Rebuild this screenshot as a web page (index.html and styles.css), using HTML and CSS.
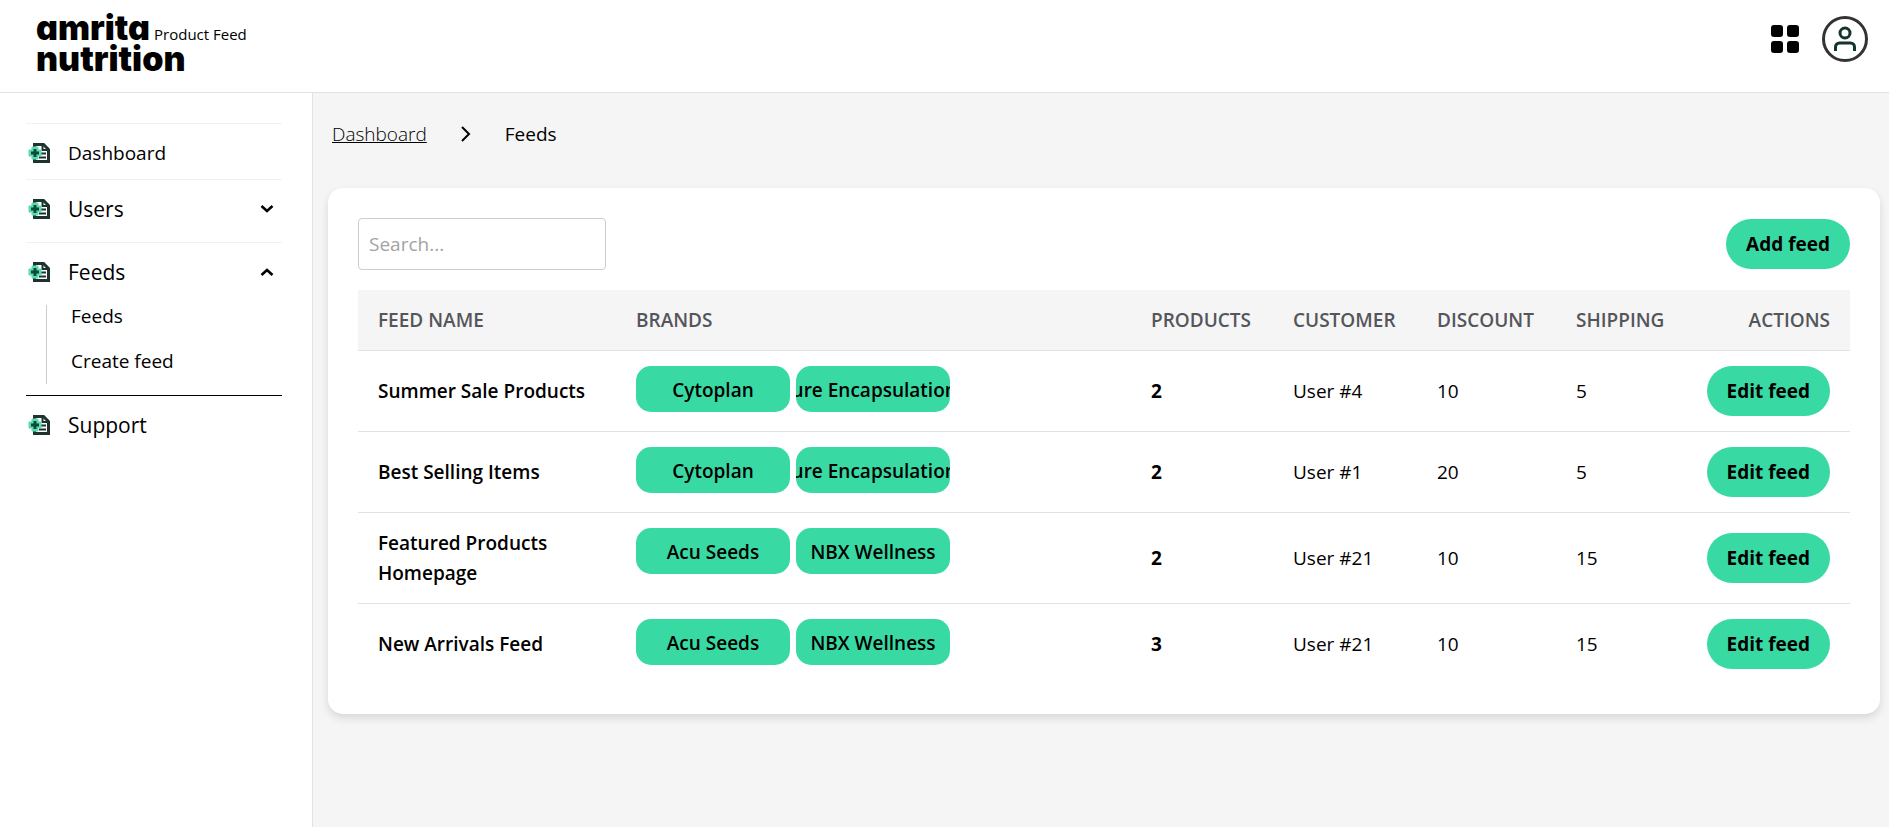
FILE: index.html
```html
<!DOCTYPE html>
<html lang="en">
<head>
    <meta charset="UTF-8">
    <meta name="viewport" content="width=device-width, initial-scale=1.0">
    <title>Product Feed</title>
    <link rel="stylesheet" href="styles.css">
</head>
<body>
    <!-- Shared icons -->
    <svg class="sprite" aria-hidden="true">
        <symbol id="icon-feed" viewBox="0 0 22 22">
            <path d="M6.500 6V2.500h9l5 5v12h-14v-4" fill="none" stroke="#1d3330" stroke-width="3"/>
            <path d="M14.500 2v6h6" fill="none" stroke="#1d3330" stroke-width="2"/>
            <path d="M12 11.500h6M11 15.500h7" stroke="#1d3330" stroke-width="2"/>
            <path d="M4 5h6v3h3v6h-3v3H4v-3H1V8h3z" fill="#5ddcae" stroke="#5ddcae" stroke-width="1" stroke-linejoin="round"/>
            <path d="M7 7v8M3 11h8" stroke="#0c4a3a" stroke-width="3"/>
        </symbol>
        <symbol id="icon-chevron" viewBox="0 0 14 10">
            <path d="M1.500 2l5.500 5 5.500-5" fill="none" stroke="#000" stroke-width="2.600"/>
        </symbol>
    </svg>

    <header class="header">
        <a class="logo" href="#">
            <span class="logo-word">amrita</span>
            <span class="logo-label">Product Feed</span>
            <span class="logo-word logo-bottom">nutrition</span>
        </a>
        <div class="header-actions">
            <button class="icon-button" type="button" aria-label="Apps">
                <svg width="28" height="28" viewBox="0 0 28 28">
                    <rect width="12" height="12" rx="3"/>
                    <rect x="16" width="12" height="12" rx="3"/>
                    <rect y="16" width="12" height="12" rx="3"/>
                    <rect x="16" y="16" width="12" height="12" rx="3"/>
                </svg>
            </button>
            <button class="icon-button avatar" type="button" aria-label="Account">
                <svg width="24" height="26" viewBox="0 0 24 26" fill="none" stroke="#12352d" stroke-width="3">
                    <circle cx="12" cy="7" r="5"/>
                    <path d="M2.500 25v-4a4 4 0 0 1 4-4h11a4 4 0 0 1 4 4v4"/>
                </svg>
            </button>
        </div>
    </header>

    <div class="layout">
        <nav class="sidebar">
            <ul class="menu">
                <li class="menu-item">
                    <a class="menu-link menu-link-small" href="#">
                        <svg class="menu-icon"><use href="#icon-feed"/></svg>
                        Dashboard
                    </a>
                </li>
                <li class="menu-item">
                    <button class="menu-link" type="button">
                        <svg class="menu-icon"><use href="#icon-feed"/></svg>
                        Users
                        <svg class="chevron"><use href="#icon-chevron"/></svg>
                    </button>
                </li>
                <li class="menu-item">
                    <button class="menu-link" type="button" aria-expanded="true">
                        <svg class="menu-icon"><use href="#icon-feed"/></svg>
                        Feeds
                        <svg class="chevron chevron-up"><use href="#icon-chevron"/></svg>
                    </button>
                    <ul class="submenu">
                        <li><a href="#">Feeds</a></li>
                        <li><a href="#">Create feed</a></li>
                    </ul>
                </li>
                <li class="menu-item menu-item-last">
                    <a class="menu-link" href="#">
                        <svg class="menu-icon"><use href="#icon-feed"/></svg>
                        Support
                    </a>
                </li>
            </ul>
        </nav>

        <main class="content">
            <div class="breadcrumb">
                <a href="#">Dashboard</a>
                <svg width="10" height="16" viewBox="0 0 10 16"><path d="M1 1l7 7-7 7" fill="none" stroke="#000" stroke-width="2"/></svg>
                <span>Feeds</span>
            </div>

            <section class="card">
                <div class="toolbar">
                    <input class="search" type="text" placeholder="Search..." aria-label="Search feeds">
                    <button class="button" type="button">Add feed</button>
                </div>

                <table class="feeds">
                    <thead>
                        <tr>
                            <th class="col-name">Feed name</th>
                            <th>Brands</th>
                            <th class="col-products">Products</th>
                            <th class="col-customer">Customer</th>
                            <th class="col-discount">Discount</th>
                            <th class="col-shipping">Shipping</th>
                            <th class="col-actions">Actions</th>
                        </tr>
                    </thead>
                    <tbody>
                        <tr>
                            <td class="name">Summer Sale Products</td>
                            <td class="brands">
                                <div class="tags"><span class="tag">Cytoplan</span><span class="tag">Pure Encapsulations</span></div>
                            </td>
                            <td class="count">2</td>
                            <td>User #4</td>
                            <td>10</td>
                            <td>5</td>
                            <td class="actions"><button class="button" type="button">Edit feed</button></td>
                        </tr>
                        <tr>
                            <td class="name">Best Selling Items</td>
                            <td class="brands">
                                <div class="tags"><span class="tag">Cytoplan</span><span class="tag">Pure Encapsulations</span></div>
                            </td>
                            <td class="count">2</td>
                            <td>User #1</td>
                            <td>20</td>
                            <td>5</td>
                            <td class="actions"><button class="button" type="button">Edit feed</button></td>
                        </tr>
                        <tr>
                            <td class="name">Featured Products Homepage</td>
                            <td class="brands">
                                <div class="tags"><span class="tag">Acu Seeds</span><span class="tag">NBX Wellness</span></div>
                            </td>
                            <td class="count">2</td>
                            <td>User #21</td>
                            <td>10</td>
                            <td>15</td>
                            <td class="actions"><button class="button" type="button">Edit feed</button></td>
                        </tr>
                        <tr>
                            <td class="name">New Arrivals Feed</td>
                            <td class="brands">
                                <div class="tags"><span class="tag">Acu Seeds</span><span class="tag">NBX Wellness</span></div>
                            </td>
                            <td class="count">3</td>
                            <td>User #21</td>
                            <td>10</td>
                            <td>15</td>
                            <td class="actions"><button class="button" type="button">Edit feed</button></td>
                        </tr>
                    </tbody>
                </table>
            </section>
        </main>
    </div>
</body>
</html>
```

FILE: styles.css
```css
* {
    box-sizing: border-box;
}

body {
    margin: 0;
    min-height: 100vh;
    display: flex;
    flex-direction: column;
    font-family: "Segoe UI", "Open Sans", "Noto Sans", sans-serif;
    font-size: 19px;
    line-height: 30px;
    color: #000;
    background-color: #f5f5f5;
}

a {
    color: inherit;
    text-decoration: none;
}

button,
input {
    font: inherit;
    color: inherit;
}

button {
    cursor: pointer;
}

ul {
    list-style: none;
    margin: 0;
    padding: 0;
}

.sprite {
    display: none;
}

/* Header */
.header {
    display: flex;
    justify-content: space-between;
    align-items: flex-start;
    height: 93px;
    padding: 12px 21px 0 36px;
    background-color: #fff;
    border-bottom: 1px solid #e2e2e2;
}

.logo {
    display: grid;
    grid-template-columns: auto auto;
    grid-auto-rows: 31px;
    column-gap: 4px;
    align-items: baseline;
    line-height: 31px;
}

.logo-word {
    font-family: "Inter", sans-serif;
    font-size: 34px;
    font-weight: 900;
    font-feature-settings: "cv11";
}

.logo-label {
    font-size: 15px;
    font-weight: 500;
    line-height: 20px;
}

.logo-bottom {
    grid-column: 1 / 3;
}

.header-actions {
    display: flex;
    align-items: center;
    gap: 23px;
    padding-top: 4px;
}

.icon-button {
    display: flex;
    align-items: center;
    justify-content: center;
    padding: 0;
    border: none;
    background: none;
}

.avatar {
    width: 46px;
    height: 46px;
    border: 3px solid #333;
    border-radius: 50%;
}

/* Sidebar */
.layout {
    flex: 1;
    display: flex;
}

.sidebar {
    flex: none;
    width: 313px;
    padding: 30px 30px 0 26px;
    background-color: #fff;
    border-right: 1px solid #e2e2e2;
}

.menu-item {
    border-top: 1px solid #f0f0f0;
}

.menu-item-last {
    border-top-color: #000;
}

.menu-link {
    display: flex;
    align-items: center;
    width: 100%;
    padding: 14px 8px 18px 2px;
    border: none;
    background: none;
    font-size: 21px;
}

.menu-link-small {
    padding: 14px 8px 11px 2px;
    font-size: 19px;
}

.menu-icon {
    width: 22px;
    height: 22px;
    margin-right: 18px;
}

.chevron {
    width: 14px;
    height: 10px;
    margin-left: auto;
}

.chevron-up {
    transform: rotate(180deg);
}

.submenu {
    display: flex;
    flex-direction: column;
    gap: 23px;
    margin: 0 0 11px 20px;
    padding: 0 0 12px 24px;
    border-left: 1px solid #ccc;
    line-height: 22px;
}

/* Content */
.content {
    flex: 1;
    min-width: 0;
    padding: 26px 9px 26px 15px;
}

.breadcrumb {
    display: flex;
    align-items: center;
    gap: 34px;
    margin: 0 4px 39px;
}

.breadcrumb a {
    font-weight: 300;
    text-decoration: underline;
}

.card {
    padding: 30px;
    background-color: #fff;
    border-radius: 15px;
    box-shadow: 0 4px 8px rgba(0, 0, 0, 0.12);
}

.toolbar {
    display: flex;
    justify-content: space-between;
    align-items: center;
    margin-bottom: 20px;
}

.search {
    width: 248px;
    height: 52px;
    padding: 0 10px;
    border: 1px solid #ccc;
    border-radius: 4px;
    background-color: #fff;
}

.search::placeholder {
    color: #a3a3a3;
}

.button {
    height: 50px;
    padding: 0 20px;
    border: none;
    border-radius: 25px;
    background-color: #39d9a4;
    font-weight: 700;
}

/* Table */
.feeds {
    width: 100%;
    table-layout: fixed;
    border-collapse: separate;
    border-spacing: 0;
}

.feeds th,
.feeds td {
    padding: 15px 0 15px 20px;
    text-align: left;
    border-bottom: 1px solid #e2e2e2;
}

.feeds th {
    background-color: #f5f5f5;
    color: #54565b;
    font-weight: 600;
    text-transform: uppercase;
}

.feeds tr:last-child td {
    border-bottom: none;
}

.feeds .col-actions,
.feeds .actions {
    padding-right: 20px;
    text-align: right;
}

.feeds thead th {
    border-bottom: 1px solid #e2e2e2;
}

.col-name {
    width: 258px;
}

.col-products {
    width: 142px;
}

.col-customer {
    width: 144px;
}

.col-discount {
    width: 139px;
}

.col-shipping {
    width: 130px;
}

.col-actions {
    width: 164px;
}

.name {
    font-weight: 600;
}

.count {
    font-weight: 700;
}

.feeds .brands {
    vertical-align: top;
}

.tags {
    display: flex;
    gap: 6px;
}

.tag {
    display: flex;
    justify-content: center;
    align-items: center;
    width: 154px;
    height: 46px;
    padding-top: 2px;
    border-radius: 15px;
    background-color: #39d9a4;
    font-weight: 600;
    white-space: nowrap;
    overflow: hidden;
}
```
